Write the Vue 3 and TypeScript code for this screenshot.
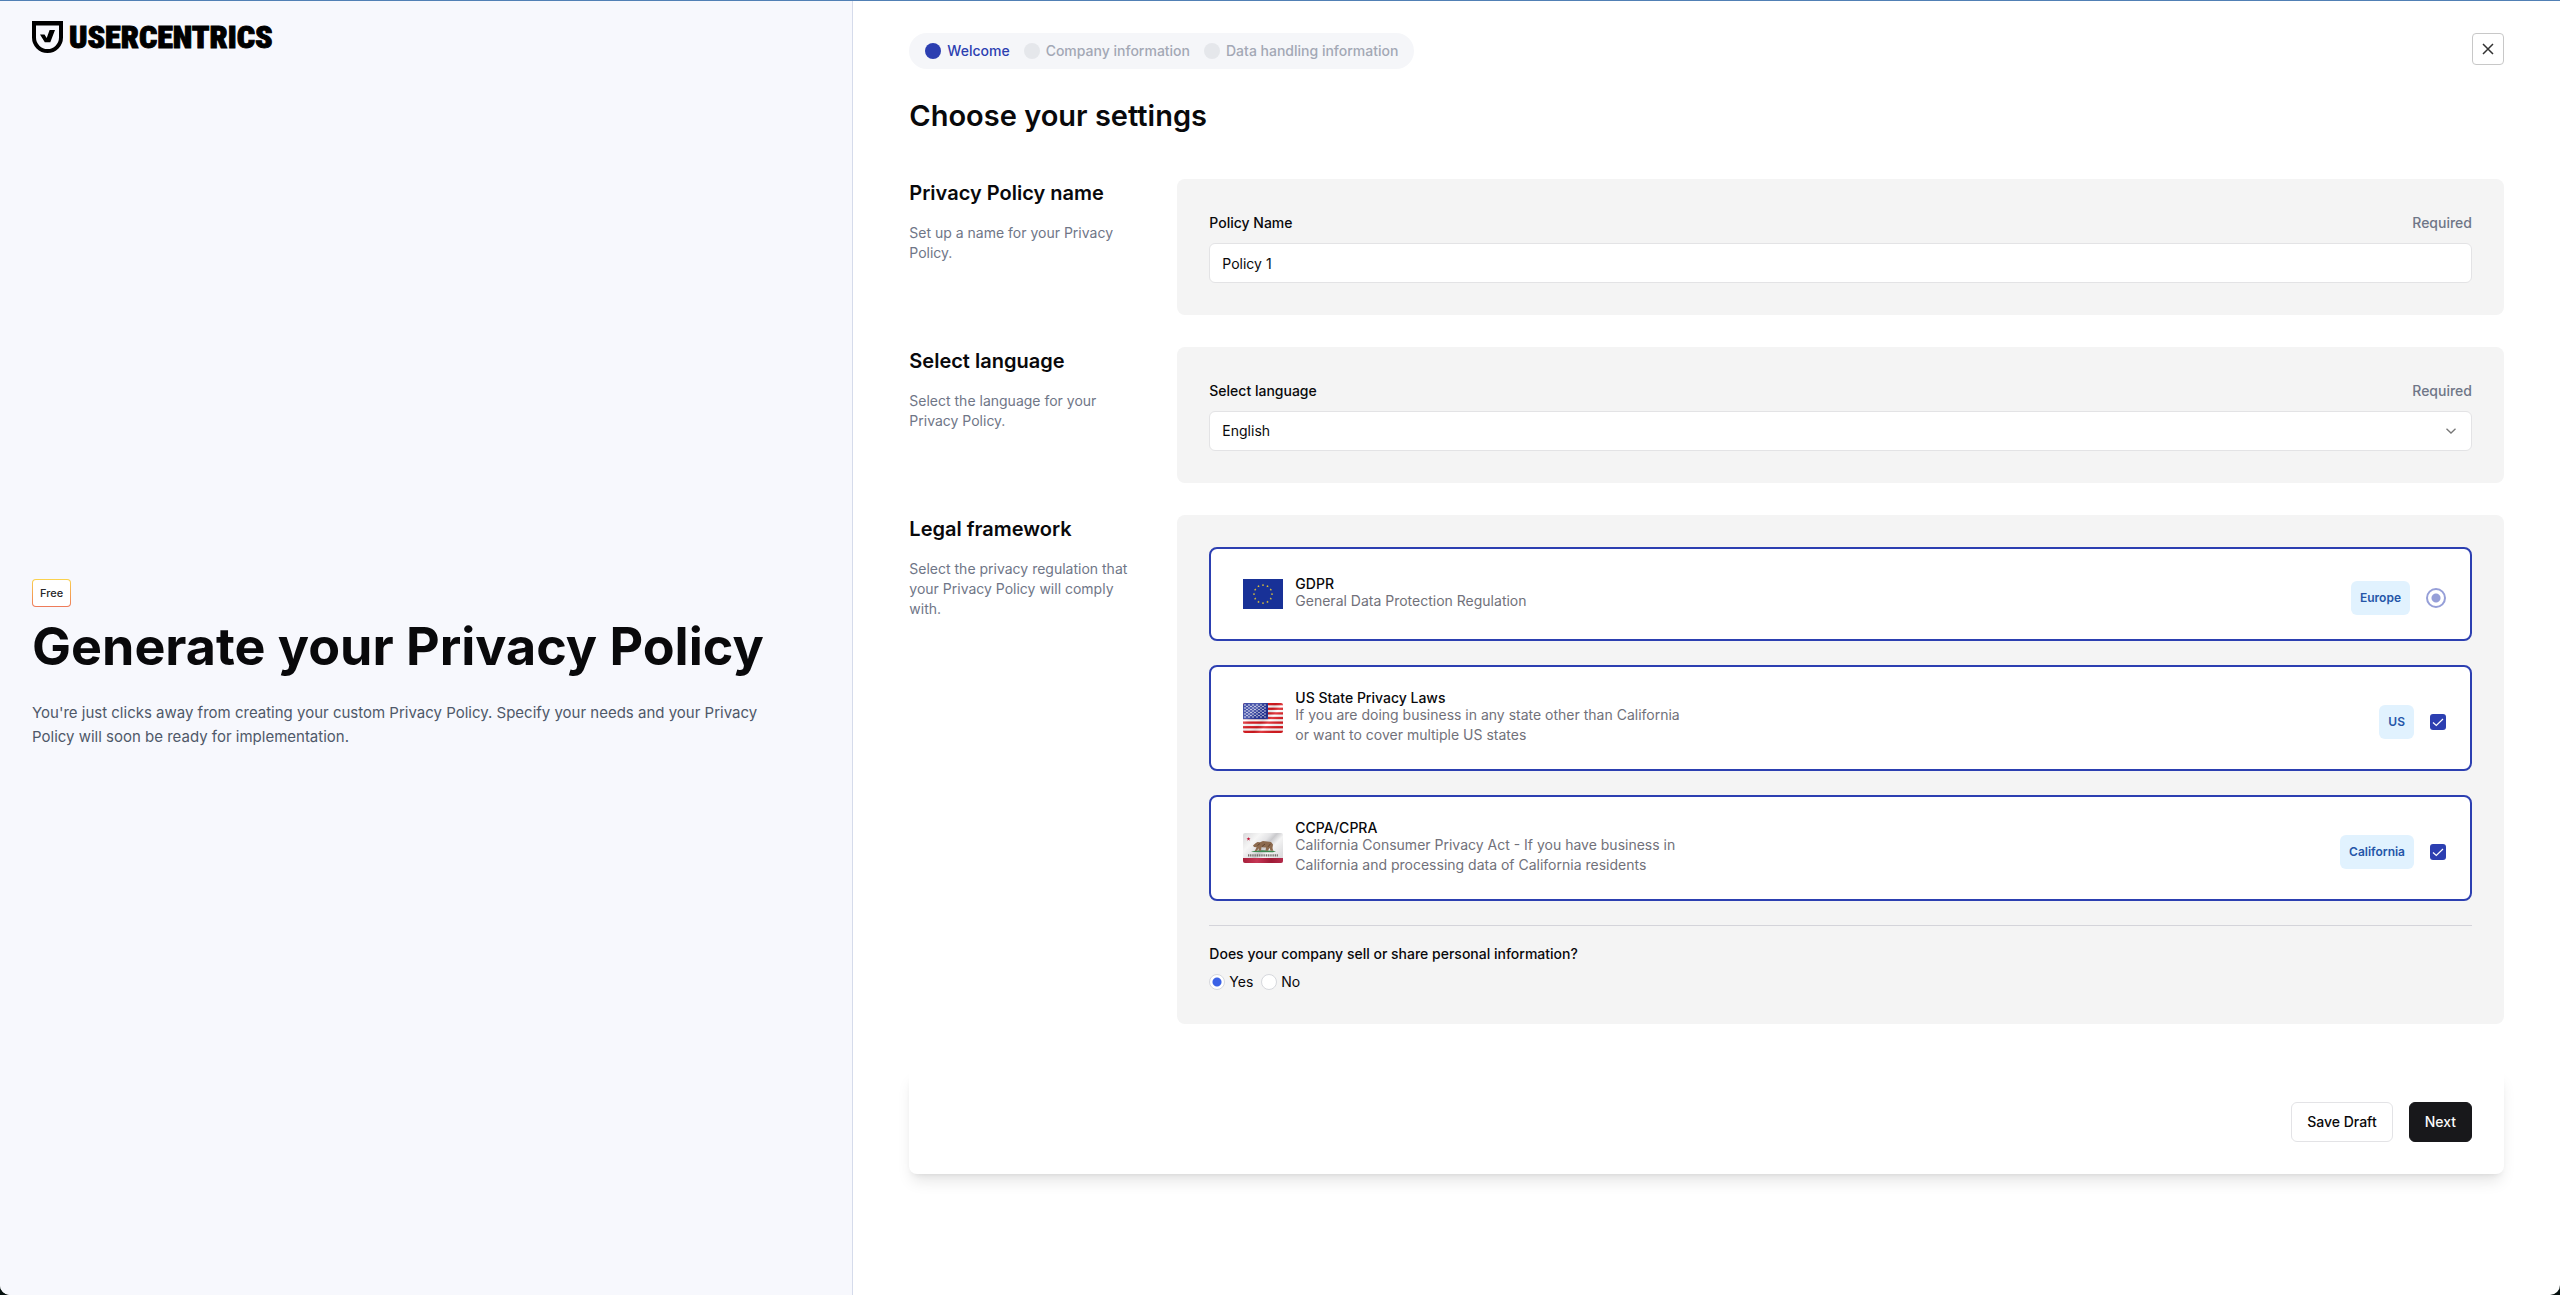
<script setup lang="ts">
import { ref } from 'vue'

interface Step {
  label: string
  active: boolean
}

interface Framework {
  id: string
  title: string
  lines: string[]
  region: string
  control: 'radio' | 'checkbox'
}

const steps: Step[] = [
  { label: 'Welcome', active: true },
  { label: 'Company information', active: false },
  { label: 'Data handling information', active: false },
]

const frameworks: Framework[] = [
  {
    id: 'gdpr',
    title: 'GDPR',
    lines: ['General Data Protection Regulation'],
    region: 'Europe',
    control: 'radio',
  },
  {
    id: 'us',
    title: 'US State Privacy Laws',
    lines: ['If you are doing business in any state other than California', 'or want to cover multiple US states'],
    region: 'US',
    control: 'checkbox',
  },
  {
    id: 'ccpa',
    title: 'CCPA/CPRA',
    lines: ['California Consumer Privacy Act - If you have business in', 'California and processing data of California residents'],
    region: 'California',
    control: 'checkbox',
  },
]

const policyName = ref('Policy 1')
const language = ref('en')
const sells = ref('yes')

const euStars = Array.from({ length: 12 }, (_, i) => {
  const a = (i * Math.PI) / 6
  return { x: 20 + 9 * Math.sin(a), y: 15 - 9 * Math.cos(a) }
})

const usStars = Array.from({ length: 9 }, (_, row) =>
  Array.from({ length: row % 2 ? 5 : 6 }, (_, col) => ({
    x: 2 + col * 4 + (row % 2 ? 2 : 0),
    y: 2 + row * 1.5,
  })),
).flat()
</script>

<template>
  <div class="page">
    <aside class="intro">
      <div class="brand">
        <svg class="shield" viewBox="0 0 31 32" width="31" height="32" aria-hidden="true">
          <path
            fill-rule="evenodd"
            d="M0 0H31V16.500A15.500 15.500 0 0 1 0 16.500ZM4 4.500V16.500A11.500 11.500 0 0 0 27 16.500V4.500Z"
          />
          <path d="M8 13.500H12.500L14.700 17L17.600 9H23L18.300 21.300H12.800Z" />
        </svg>
        <span class="wordmark">USERCENTRICS</span>
      </div>
      <div class="pitch">
        <span class="plan">Free</span>
        <h1>Generate your Privacy Policy</h1>
        <p>
          You're just clicks away from creating your custom Privacy Policy. Specify your needs and your Privacy Policy
          will soon be ready for implementation.
        </p>
      </div>
    </aside>

    <main class="content">
      <header class="topbar">
        <ol class="steps">
          <li v-for="step in steps" :key="step.label" :class="{ active: step.active }">
            <span class="dot"></span>{{ step.label }}
          </li>
        </ol>
        <button class="close" type="button" aria-label="Close">
          <svg viewBox="0 0 12 12" width="12" height="12" aria-hidden="true">
            <path d="M1 1L11 11M11 1L1 11" fill="none" stroke="#333" stroke-width="1.500" />
          </svg>
        </button>
      </header>

      <h2>Choose your settings</h2>

      <form @submit.prevent>
        <section class="row">
          <div class="about">
            <h3>Privacy Policy name</h3>
            <p>Set up a name for your Privacy Policy.</p>
          </div>
          <div class="panel">
            <div class="field-head">
              <label for="policy-name">Policy Name</label>
              <span class="required">Required</span>
            </div>
            <input id="policy-name" v-model="policyName" class="control" type="text" />
          </div>
        </section>

        <section class="row">
          <div class="about">
            <h3>Select language</h3>
            <p>Select the language for your Privacy Policy.</p>
          </div>
          <div class="panel">
            <div class="field-head">
              <label for="language">Select language</label>
              <span class="required">Required</span>
            </div>
            <div class="select">
              <select id="language" v-model="language" class="control">
                <option value="en">English</option>
              </select>
              <svg viewBox="0 0 10 6" width="10" height="6" aria-hidden="true">
                <path d="M0.500 0.700L5 5L9.500 0.700" fill="none" stroke="#777" stroke-width="1.300" />
              </svg>
            </div>
          </div>
        </section>

        <section class="row">
          <div class="about">
            <h3>Legal framework</h3>
            <p>Select the privacy regulation that your Privacy Policy will comply with.</p>
          </div>
          <div class="panel frameworks">
            <label v-for="item in frameworks" :key="item.id" class="option" :for="item.id">
              <svg v-if="item.id === 'gdpr'" class="flag" viewBox="0 0 40 30" width="40" height="30" aria-hidden="true">
                <rect width="40" height="30" fill="#183197" />
                <path
                  v-for="(s, i) in euStars"
                  :key="i"
                  :transform="`translate(${s.x} ${s.y})`"
                  d="M0 -1.200L0.350 -0.350L1.200 -0.300L0.550 0.300L0.800 1.100L0 0.650L-0.800 1.100L-0.550 0.300L-1.200 -0.300L-0.350 -0.350Z"
                  fill="#f3d32d"
                />
              </svg>
              <svg v-else-if="item.id === 'us'" class="flag round" viewBox="0 0 40 30" width="40" height="30" aria-hidden="true">
                <defs>
                  <linearGradient id="wave-us" x1="0" y1="0" x2="1" y2="0.600">
                    <stop offset="0" stop-color="#fff" stop-opacity="0.100" />
                    <stop offset="0.300" stop-color="#fff" stop-opacity="0.200" />
                    <stop offset="0.500" stop-color="#000" stop-opacity="0.050" />
                    <stop offset="0.620" stop-color="#000" stop-opacity="0.120" />
                    <stop offset="0.750" stop-color="#fff" stop-opacity="0.150" />
                    <stop offset="1" stop-color="#000" stop-opacity="0.080" />
                  </linearGradient>
                </defs>
                <rect width="40" height="30" fill="#fff" />
                <rect v-for="n in 7" :key="n" :y="((n - 1) * 60) / 13" width="40" :height="30 / 13" fill="#dd1c22" />
                <rect width="25" height="16.150" fill="#26359b" />
                <circle v-for="(s, i) in usStars" :key="`s${i}`" :cx="s.x" :cy="s.y" r="0.750" fill="#fff" />
                <rect width="40" height="30" fill="url(#wave-us)" />
              </svg>
              <svg v-else class="flag round" viewBox="0 0 40 30" width="40" height="30" aria-hidden="true">
                <defs>
                  <linearGradient id="wave-ca" x1="0" y1="0" x2="1" y2="0.700">
                    <stop offset="0" stop-color="#d9d9db" />
                    <stop offset="0.300" stop-color="#f6f6f6" />
                    <stop offset="0.480" stop-color="#e4e4e6" />
                    <stop offset="0.580" stop-color="#c9c9cc" />
                    <stop offset="0.720" stop-color="#f4f4f4" />
                    <stop offset="1" stop-color="#dcdcde" />
                  </linearGradient>
                  <linearGradient id="wave-red" x1="0" y1="0" x2="1" y2="0">
                    <stop offset="0" stop-color="#a8203b" />
                    <stop offset="0.350" stop-color="#c63655" />
                    <stop offset="0.700" stop-color="#9e1a35" />
                    <stop offset="1" stop-color="#b4294a" />
                  </linearGradient>
                </defs>
                <rect width="40" height="30" fill="url(#wave-ca)" />
                <path d="M5.500 4L6 5.300H7.500L6.300 6.200L6.800 7.700L5.500 6.800L4.200 7.700L4.700 6.200L3.500 5.300H5Z" fill="#c2183a" />
                <path d="M8 19Q12 17 20 17.200T33 18.200L30 19.200Z" fill="#3f8a52" />
                <path
                  d="M10 12.500L12.500 10.300L14.500 8.900L17 9.200L20 8L24 8.600L28 9L30 11.500L29.500 15L30.200 17.800H27.500L26.500 14.800L25 17.800H22.500L23 14.600L18.500 14.300L18 17.800H15.600L15.800 15.300L13.700 18H11.800L13.600 14.200L11 13.900Z"
                  fill="#8c6a4e"
                />
                <path d="M14.500 12.500L17 10.500M19 13.500L22 11M25 13.800L27.500 10.800" stroke="#5a3f2c" stroke-width="0.900" fill="none" />
                <path d="M5 22.300H35" stroke="#77716d" stroke-width="2.200" stroke-dasharray="1.100 0.700" />
                <rect y="25" width="40" height="5" fill="url(#wave-red)" />
              </svg>

              <span class="option-text">
                <span class="option-title">{{ item.title }}</span>
                <span v-for="line in item.lines" :key="line" class="option-line">{{ line }}</span>
              </span>

              <span class="option-side">
                <span class="region">{{ item.region }}</span>
                <input v-if="item.control === 'radio'" :id="item.id" class="locked" type="radio" checked disabled />
                <input v-else :id="item.id" class="tick" type="checkbox" checked />
              </span>
            </label>

            <fieldset class="question">
              <legend>Does your company sell or share personal information?</legend>
              <div class="answers">
                <label><input v-model="sells" type="radio" name="sells" value="yes" />Yes</label>
                <label><input v-model="sells" type="radio" name="sells" value="no" />No</label>
              </div>
            </fieldset>
          </div>
        </section>

        <footer class="actions">
          <button class="btn" type="button">Save Draft</button>
          <button class="btn primary" type="submit">Next</button>
        </footer>
      </form>
    </main>
  </div>
</template>

<style>
html {
  background: #06110f;
}
</style>

<style scoped>
* {
  box-sizing: border-box;
  margin: 0;
}

.page {
  display: grid;
  grid-template-columns: 1fr 2fr;
  min-height: 100vh;
  overflow: hidden;
  border-top: 1px solid #5180b5;
  border-radius: 0 0 10px 10px;
  background: #fff;
  color: #09090b;
  font-family: Inter, 'Liberation Sans', sans-serif;
  font-size: 14px;
  line-height: 20px;
}

.intro {
  display: flex;
  flex-direction: column;
  padding: 20px 32px;
  border-right: 1px solid #d5dbeb;
  background: #f7f8fd;
}

.brand {
  display: flex;
  align-items: center;
  gap: 6px;
  height: 32px;
  color: #000;
}

.wordmark {
  font-family: 'Liberation Sans Narrow', 'Roboto Condensed', 'DejaVu Sans Condensed', sans-serif;
  font-size: 32px;
  font-weight: 900;
  line-height: 32px;
  white-space: nowrap;
  -webkit-text-stroke: 1px #000;
}

.pitch {
  display: flex;
  flex: 1;
  flex-direction: column;
  align-items: flex-start;
  justify-content: center;
}

.plan {
  padding: 3px 7px;
  border: 1px solid transparent;
  border-radius: 4px;
  background:
    linear-gradient(#fff, #fff) padding-box,
    linear-gradient(#fbd34d, #ee7a5a) border-box;
  color: #27272a;
  font-size: 11px;
  font-weight: 500;
}

h1 {
  margin: 8px 0 22px;
  font-size: 52px;
  font-weight: 700;
  line-height: 64px;
  white-space: nowrap;
}

.pitch p {
  padding-right: 32px;
  color: #4f5869;
  font-size: 15px;
  line-height: 24px;
}

.content {
  min-width: 0;
  padding: 32px 56px;
}

.topbar {
  display: flex;
  align-items: flex-start;
  justify-content: space-between;
}

.steps {
  display: flex;
  gap: 14px;
  padding: 8px 16px;
  border-radius: 18px;
  background: #f5f6f9;
  list-style: none;
  color: #a3a8b5;
  font-weight: 500;
}

.steps li {
  display: flex;
  align-items: center;
  gap: 6px;
}

.steps .active {
  color: #2c3fb1;
}

.dot {
  width: 16px;
  height: 16px;
  border-radius: 50%;
  background: #e5e7eb;
}

.active .dot {
  background: #2c3fb1;
}

.close {
  display: grid;
  place-items: center;
  width: 32px;
  height: 32px;
  padding: 0;
  border: 1px solid #c8c8c8;
  border-radius: 4px;
  background: #fff;
}

h2 {
  margin: 29px 0 45px;
  font-size: 29px;
  font-weight: 600;
  line-height: 36px;
}

form {
  display: flex;
  flex-direction: column;
  gap: 32px;
}

.row {
  display: grid;
  grid-template-columns: 224px 1fr;
  gap: 44px;
}

h3 {
  margin-bottom: 16px;
  font-size: 20px;
  font-weight: 600;
  line-height: 28px;
}

.about p {
  color: #6f7687;
}

.panel {
  padding: 32px;
  border-radius: 8px;
  background: #f4f4f4;
}

.field-head {
  display: flex;
  justify-content: space-between;
  margin-bottom: 8px;
  line-height: 24px;
  font-weight: 500;
}

.required {
  color: #6f7687;
}

.control {
  display: block;
  width: 100%;
  height: 40px;
  padding: 0 12px;
  border: 1px solid #e3e3e5;
  border-radius: 6px;
  background: #fff;
  color: #09090b;
  font: inherit;
  appearance: none;
}

.select {
  position: relative;
}

.select svg {
  position: absolute;
  top: 17px;
  right: 16px;
  pointer-events: none;
}

.frameworks {
  display: flex;
  flex-direction: column;
  gap: 24px;
}

.option {
  display: flex;
  align-items: center;
  padding: 24px 24px 24px 32px;
  border: 2px solid #2c3fb1;
  border-radius: 8px;
  background: #fff;
}

.flag {
  flex: none;
  margin-right: 12px;
}

.round {
  border-radius: 2px;
}

.option-text {
  display: flex;
  flex: 1;
  flex-direction: column;
}

.option-title {
  font-weight: 500;
  line-height: 14px;
}

.option-line {
  color: #71717a;
}

.option-side {
  display: flex;
  align-items: center;
  gap: 16px;
  padding-top: 8px;
}

.region {
  padding: 7px 9px;
  border-radius: 6px;
  background: #e1f2fe;
  color: #2556a8;
  font-size: 12px;
  font-weight: 600;
}

.locked,
.tick,
.answers input {
  flex: none;
  width: 16px;
  height: 16px;
  margin: 0;
  appearance: none;
}

.locked {
  width: 20px;
  height: 20px;
  border: 2px solid #969fd8;
  border-radius: 50%;
  background: radial-gradient(circle, #969fd8 4px, #fff 5px);
}

.tick {
  border-radius: 3px;
  background: #2c3fb1
    url("data:image/svg+xml,%3Csvg xmlns='http://www.w3.org/2000/svg' viewBox='0 0 16 16'%3E%3Cpath d='M3 8.500L6.300 11.500L13 5' fill='none' stroke='%23fff' stroke-width='1.200'/%3E%3C/svg%3E");
}

.question {
  min-width: 0;
  padding: 0;
  border: 0;
  border-top: 1px solid #d4d4da;
}

.question legend {
  float: left;
  width: 100%;
  padding: 18px 0 8px;
  font-weight: 500;
}

.answers {
  display: flex;
  clear: both;
  gap: 8px;
}

.answers label {
  display: flex;
  align-items: center;
  gap: 4px;
}

.answers input {
  border: 1px solid #d6d8dd;
  border-radius: 50%;
  background: #fff;
}

.answers input:checked {
  background: radial-gradient(circle, #3b62e6 4px, #fff 5px);
}

.actions {
  display: flex;
  justify-content: flex-end;
  gap: 16px;
  margin-top: 14px;
  padding: 32px;
  border-radius: 8px;
  box-shadow:
    0 10px 15px -3px rgb(0 0 0 / 10%),
    0 4px 6px -4px rgb(0 0 0 / 10%);
}

.btn {
  height: 40px;
  padding: 0 15px;
  border: 1px solid #e3e3e6;
  border-radius: 6px;
  background: #fff;
  color: #09090b;
  font: inherit;
  font-weight: 500;
}

.primary {
  border-color: #18181b;
  background: #18181b;
  color: #fafafa;
}
</style>
